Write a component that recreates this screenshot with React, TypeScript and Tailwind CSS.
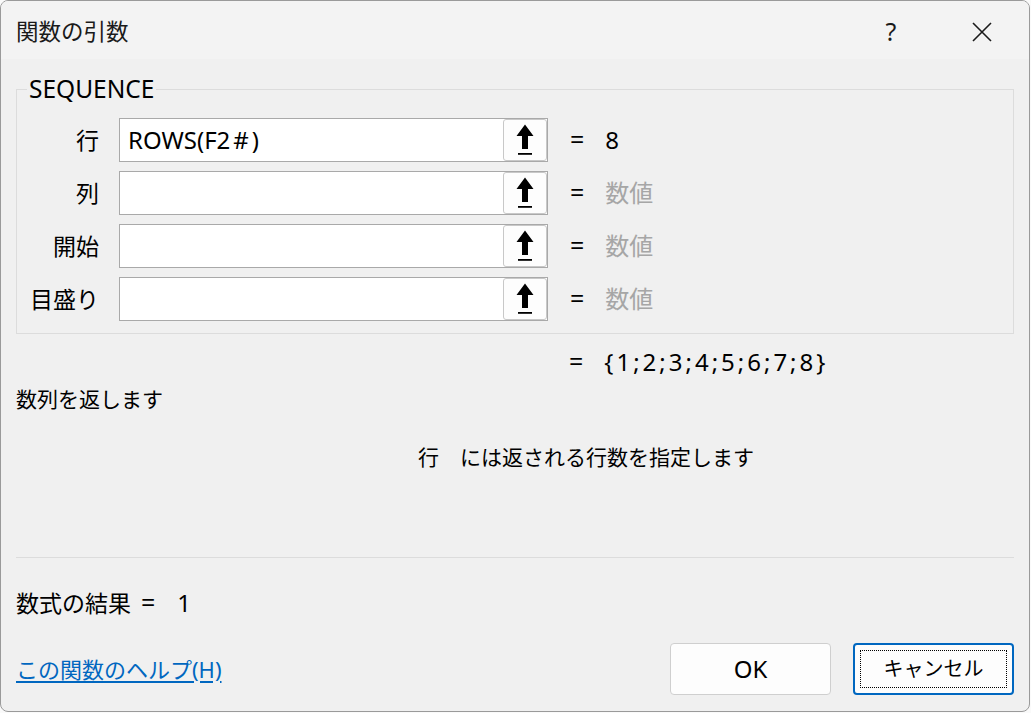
const font = "font-['Segoe_UI','Noto_Sans','Noto_Sans_CJK_JP',sans-serif]";

const rows = [
  { label: "行", value: "ROWS(F2#)", result: "8", muted: false },
  { label: "列", value: "", result: "数値", muted: true },
  { label: "開始", value: "", result: "数値", muted: true },
  { label: "目盛り", value: "", result: "数値", muted: true },
];

function RefIcon() {
  return (
    <svg width="18" height="32" viewBox="0 0 18 32">
      <path d="M9 0.5 L17.5 12 L12 12 L12 25 L6 25 L6 12 L0.5 12 Z" fill="#000" />
      <rect x="2" y="29" width="14" height="1.8" fill="#000" />
    </svg>
  );
}

export default function App() {
  return (
    <div className={`w-[1031px] h-[713px] bg-[#fafafa] overflow-hidden ${font}`}>
      <div className="w-[1030px] h-[712px] bg-[#f0f0f0] border border-[#9a9a9a] rounded-[8px] overflow-hidden flex flex-col">
        {/* title bar */}
        <div className="h-[58px] bg-[#f3f3f3] flex items-center pl-[15px] pt-[3px] shrink-0">
          <span className="text-[22.5px] text-[#1a1a1a] flex-1">関数の引数</span>
          <span className="text-[25px] text-[#1a1a1a] w-[92px] text-center mr-[35px]">?</span>
          <svg width="20" height="20" viewBox="0 0 20 20" className="mr-[37px]">
            <path d="M1 1 L19 19 M19 1 L1 19" stroke="#1a1a1a" strokeWidth="1.6" />
          </svg>
        </div>

        <div className="px-[15px] flex flex-col flex-1">
          {/* group box */}
          <div className="relative mt-[30px] border border-[#dcdcdc] h-[245px]">
            <span className="absolute left-[10px] -top-[17px] bg-[#f0f0f0] px-[2px] text-[24.5px] leading-[32px] text-black">
              SEQUENCE
            </span>
            <div className="flex flex-col gap-[9px] pt-[28px]">
              {rows.map((r) => (
                <div key={r.label} className="flex items-center h-[44px]">
                  <span className="w-[82px] text-right text-[23px] text-black">{r.label}</span>
                  <div className="ml-[20px] w-[429px] h-[44px] bg-white border border-[#a9a9a9] flex items-center">
                    <span className="flex-1 pl-[8px] text-[24px] text-black">
                      {r.value === "ROWS(F2#)" ? (
                        <>
                          ROWS(F2<span className="mx-[3px]">#</span>)
                        </>
                      ) : (
                        r.value
                      )}
                    </span>
                    <div className="w-[44px] h-[42px] border border-[#c8c8c8] rounded-[3px] bg-[#fdfdfd] flex items-center justify-center">
                      <RefIcon />
                    </div>
                  </div>
                  <span className="ml-[22px] text-[25px] text-black">=</span>
                  <span className={`ml-[21px] text-[24px] ${r.muted ? "text-[#a6a6a6]" : "text-black"}`}>{r.result}</span>
                </div>
              ))}
            </div>
          </div>

          <div className="h-[56px] flex items-center pl-[553px] text-[24px] text-black">
            <span className="text-[25px]">=</span>
            <span className="ml-[21px] tracking-[3px]">{"{1;2;3;4;5;6;7;8}"}</span>
          </div>
          <div className="h-[20px] flex items-center text-[21px] text-black">数列を返します</div>
          <div className="mt-[37px] pl-[402px] text-[21px] text-black leading-[20px]">
            行<span className="ml-[21px]">には返される行数を指定します</span>
          </div>

          <div className="mt-[90px] border-t border-[#dcdcdc]" />

          <div className="mt-[31px] h-[28px] flex items-center text-[23px] text-black">
            <span>数式の結果</span>
            <span className="ml-[10px] text-[25px]">=</span>
            <span className="ml-[22px] text-[24px]">1</span>
          </div>

          <div className="mt-[26px] flex items-center">
            <span className="text-[22px] text-[#0067c0] underline underline-offset-[3px] flex-1">この関数のヘルプ(H)</span>
            <button className="w-[161px] h-[52px] bg-[#fdfdfd] border border-[#cfcfcf] rounded-[4px] text-[24px] text-black">
              OK
            </button>
            <button className="ml-[22px] w-[161px] h-[52px] bg-[#fdfdfd] border-2 border-[#0067c0] rounded-[4px] p-[5px]">
              <div className="w-full h-full border border-dotted border-black flex items-center justify-center text-[20px] text-black">
                キャンセル
              </div>
            </button>
          </div>
        </div>
      </div>
    </div>
  );
}
